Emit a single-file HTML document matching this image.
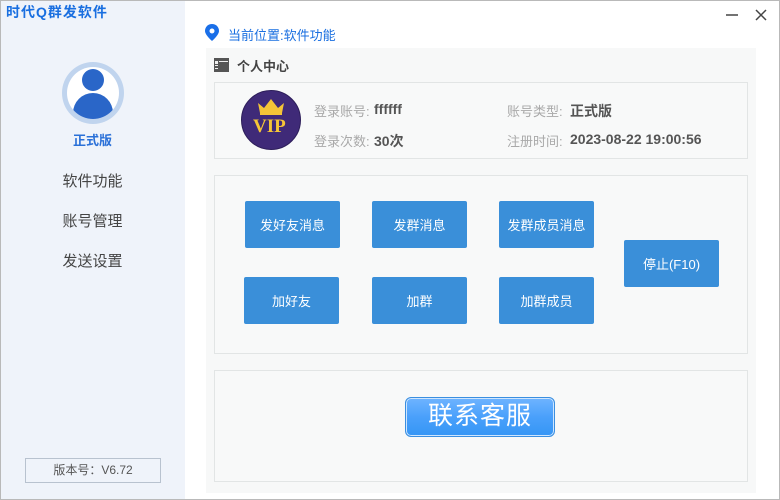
<!DOCTYPE html>
<html><head><meta charset="utf-8"><style>
*{margin:0;padding:0;box-sizing:border-box}
body{width:780px;height:500px;position:relative;background:#fff;font-family:"Liberation Sans","Noto Sans CJK SC",sans-serif;overflow:hidden}
.a{position:absolute}
.side{left:0;top:0;width:185px;height:500px;background:#eff3fa}
.title{left:6px;top:2px;font-size:14px;font-weight:bold;color:#1a6fe0;letter-spacing:1px}
.nav{left:0;width:185px;text-align:center;font-size:15px;color:#444}
.main{left:206px;top:48px;width:550px;height:445px;background:#f7f8f8}
.box{border:1px solid #e2e5e5;background:#f8f9f9}
.btn{width:95px;height:47px;background:#3a8fd9;color:#fff;font-size:13px;display:flex;align-items:center;justify-content:center;border-radius:2px}
.lbl{font-size:13px;color:#a9a9a9}
.val{font-size:14px;font-weight:bold;color:#555}
</style></head><body>
<div class="a side"></div>
<div class="a title">时代Q群发软件</div>
<div class="a" style="left:62px;top:62px;width:62px;height:62px;border-radius:50%;background:#c0d4ee"></div>
<div class="a" style="left:67px;top:67px;width:52px;height:52px;border-radius:50%;background:#fff;overflow:hidden">
<div class="a" style="left:15px;top:2px;width:22px;height:22px;border-radius:50%;background:#2a66c8"></div>
<div class="a" style="left:6px;top:26px;width:40px;height:26px;border-radius:20px 20px 0 0;background:#2a66c8"></div></div>
<div class="a" style="left:0;top:130px;width:185px;text-align:center;font-size:13px;font-weight:bold;color:#2a70d8">正式版</div>
<div class="a nav" style="top:170px">软件功能</div>
<div class="a nav" style="top:210px">账号管理</div>
<div class="a nav" style="top:250px">发送设置</div>
<div class="a" style="left:25px;top:458px;width:136px;height:25px;border:1px solid #b8c2cf;font-size:12px;color:#555;text-align:center;line-height:23px">版本号：V6.72</div>
<svg class="a" style="left:726px;top:8px" width="42" height="14"><path d="M0 7h12" stroke="#444" stroke-width="1.5"/><path d="M30 2l10 10M40 2l-10 10" stroke="#444" stroke-width="1.5"/></svg>
<svg class="a" style="left:205px;top:24px" width="14" height="17" viewBox="0 0 14 17"><path d="M7 0C3 0 0 3 0 7c0 4 7 10 7 10s7-6 7-10c0-4-3-7-7-7z" fill="#1a6fe8"/><circle cx="7" cy="7" r="2.5" fill="#fff"/></svg>
<div class="a" style="left:228px;top:25px;font-size:13px;color:#1a6fe0">当前位置:软件功能</div>
<div class="a main"></div>
<svg class="a" style="left:214px;top:58px" width="15" height="14"><rect width="15" height="14" fill="#555"/><rect x="1" y="3" width="3" height="3" fill="#eee"/><rect x="5" y="3" width="9" height="1" fill="#eee"/><rect x="1" y="7" width="3" height="1" fill="#eee"/><rect x="1" y="10" width="3" height="1" fill="#eee"/></svg>
<div class="a" style="left:237px;top:56px;font-size:13px;font-weight:bold;color:#444">个人中心</div>
<div class="a box" style="left:214px;top:82px;width:534px;height:77px"></div>
<div class="a" style="left:241px;top:90px;width:60px;height:60px;border-radius:50%;background:#3f2a78;border:1px solid #2d1e5a"></div>
<svg class="a" style="left:256px;top:97px" width="30" height="18" viewBox="0 0 30 18"><path d="M2 6l6 5 7-9 7 9 6-5-2 10H4z" fill="#f5c537"/><rect x="4" y="15" width="22" height="3" fill="#f5c537"/></svg>
<div class="a" style="left:253px;top:116px;font-family:'Liberation Serif',serif;font-size:19px;font-weight:bold;color:#f5c537">VIP</div>
<div class="a lbl" style="left:314px;top:101px">登录账号:</div><div class="a val" style="left:374px;top:101px">ffffff</div>
<div class="a lbl" style="left:314px;top:131px">登录次数:</div><div class="a val" style="left:374px;top:131px">30次</div>
<div class="a lbl" style="left:507px;top:101px">账号类型:</div><div class="a val" style="left:570px;top:101px">正式版</div>
<div class="a lbl" style="left:507px;top:131px">注册时间:</div><div class="a val" style="left:570px;top:131px">2023-08-22 19:00:56</div>
<div class="a box" style="left:214px;top:175px;width:534px;height:179px"></div>
<div class="a btn" style="left:245px;top:201px">发好友消息</div>
<div class="a btn" style="left:372px;top:201px">发群消息</div>
<div class="a btn" style="left:499px;top:201px">发群成员消息</div>
<div class="a btn" style="left:244px;top:277px">加好友</div>
<div class="a btn" style="left:372px;top:277px">加群</div>
<div class="a btn" style="left:499px;top:277px">加群成员</div>
<div class="a btn" style="left:624px;top:240px">停止(F10)</div>
<div class="a box" style="left:214px;top:370px;width:534px;height:112px"></div>
<div class="a" style="left:405px;top:397px;width:150px;height:40px;border:1px solid #3b8fe0;border-radius:6px;background:linear-gradient(#6fb4ff,#4aa0fb 50%,#3596f5);box-shadow:inset 0 0 0 1px #cfe6ff;color:#fff;font-size:25px;text-align:center;line-height:36px;letter-spacing:1px">联系客服</div>
<div class="a" style="left:0;top:0;width:780px;height:500px;border:1px solid #b9b9b9"></div>
</body></html>
